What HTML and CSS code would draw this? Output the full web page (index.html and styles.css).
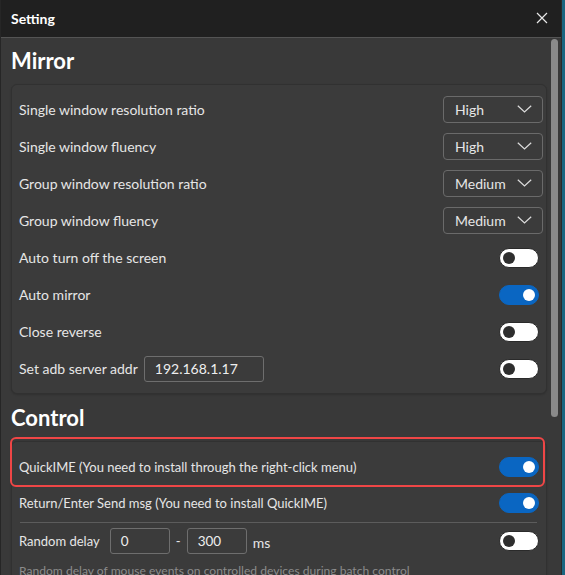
FILE: index.html
```html
<!DOCTYPE html>
<html>
<head>
<meta charset="utf-8">
<link rel="stylesheet" href="styles.css">
</head>
<body>
<div class="window">
  <div class="titlebar">
    <span class="title">Setting</span>
    <svg class="close" width="12" height="12" viewBox="0 0 12 12"><path d="M1 1 L11 11 M11 1 L1 11" stroke="#e8e8e8" stroke-width="1.2" fill="none"/></svg>
  </div>
  <div class="content">
    <div class="scroll">
      <h2 class="section-title">Mirror</h2>
      <div class="card">
        <div class="row">
          <span class="label">Single window resolution ratio</span>
          <div class="select"><span>High</span><svg class="chev" width="15" height="8" viewBox="0 0 15 8"><path d="M0.8 0.8 L7.5 7 L14.2 0.8" stroke="#dcdcdc" stroke-width="1.2" fill="none"/></svg></div>
        </div>
        <div class="row">
          <span class="label">Single window fluency</span>
          <div class="select"><span>High</span><svg class="chev" width="15" height="8" viewBox="0 0 15 8"><path d="M0.8 0.8 L7.5 7 L14.2 0.8" stroke="#dcdcdc" stroke-width="1.2" fill="none"/></svg></div>
        </div>
        <div class="row">
          <span class="label">Group window resolution ratio</span>
          <div class="select"><span>Medium</span><svg class="chev" width="15" height="8" viewBox="0 0 15 8"><path d="M0.8 0.8 L7.5 7 L14.2 0.8" stroke="#dcdcdc" stroke-width="1.2" fill="none"/></svg></div>
        </div>
        <div class="row">
          <span class="label">Group window fluency</span>
          <div class="select"><span>Medium</span><svg class="chev" width="15" height="8" viewBox="0 0 15 8"><path d="M0.8 0.8 L7.5 7 L14.2 0.8" stroke="#dcdcdc" stroke-width="1.2" fill="none"/></svg></div>
        </div>
        <div class="row">
          <span class="label">Auto turn off the screen</span>
          <span class="toggle"></span>
        </div>
        <div class="row">
          <span class="label">Auto mirror</span>
          <span class="toggle on"></span>
        </div>
        <div class="row">
          <span class="label">Close reverse</span>
          <span class="toggle"></span>
        </div>
        <div class="row">
          <div class="group">
            <span class="label">Set adb server addr</span>
            <div class="input ip">192.168.1.17</div>
          </div>
          <span class="toggle"></span>
        </div>
      </div>
      <h2 class="section-title control-title">Control</h2>
      <div class="card control">
        <div class="row small highlighted">
          <span class="label">QuickIME (You need to install through the right-click menu)</span>
          <span class="toggle on"></span>
          <span class="highlight-box"></span>
        </div>
        <div class="row small enter-row">
          <span class="label">Return/Enter Send msg (You need to install QuickIME)</span>
          <span class="toggle on"></span>
        </div>
        <div class="divider"></div>
        <div class="row small delay-row">
          <div class="group">
            <span class="label">Random delay</span>
            <div class="input num">0</div>
            <span class="dash">-</span>
            <div class="input num">300</div>
            <span class="unit">ms</span>
          </div>
          <span class="toggle"></span>
        </div>
        <div class="desc">Random delay of mouse events on controlled devices during batch control</div>
      </div>
    </div>
    <div class="scrollbar"></div>
  </div>
</div>
</body>
</html>
```
FILE: styles.css
```css
* { box-sizing: border-box; }
html, body { margin: 0; padding: 0; }
body {
  width: 565px;
  height: 575px;
  overflow: hidden;
  background: #1a6580;
  font-family: "Lato", "Noto Sans", sans-serif;
  color: #e6e6e6;
}
.window {
  width: 562px;
  height: 575px;
  background: #393939;
  border-left: 1px solid #262626;
  border-right: 1px solid #2a2a2a;
  display: flex;
  flex-direction: column;
}
.titlebar {
  height: 38px;
  flex: none;
  background: #202020;
  border-bottom: 1px solid #545454;
  display: flex;
  align-items: center;
  justify-content: space-between;
  padding: 0 13px 0 10px;
}
.title {
  font-size: 14px;
  font-weight: 700;
  color: #ffffff;
  margin-top: -1px;
}
.close { display: block; margin-top: -1px; }
.content {
  position: relative;
  flex: 1;
  overflow: hidden;
}
.scroll {
  padding: 0 14px 0 10px;
}
.section-title {
  margin: 0;
  padding-top: 9px;
  height: 46px;
  font-size: 22px;
  line-height: 28px;
  font-weight: 700;
  color: #ffffff;
}
.control-title {
  padding-top: 10px;
  height: 47px;
}
.card {
  background: #3b3b3b;
  border: 1px solid #313131;
  border-radius: 6px;
  padding: 6px 3px 6px 7px;
  box-shadow: 0 1px 2px rgba(0,0,0,0.15);
}
.row {
  height: 37px;
  display: flex;
  align-items: center;
  justify-content: space-between;
  font-size: 14px;
  position: relative;
}
.row.small { font-size: 13px; }
.label { white-space: nowrap; }
.group {
  display: flex;
  align-items: center;
}
.select {
  width: 100px;
  height: 27px;
  border: 1px solid #6a6a6a;
  border-radius: 4px;
  display: flex;
  align-items: center;
  justify-content: space-between;
  padding: 0 10px 0 11px;
  font-size: 14px;
  margin-top: -1px;
}
.chev { display: block; }
.toggle {
  width: 40px;
  height: 20px;
  border-radius: 10px;
  background: #ffffff;
  border: 1px solid #2a2a2a;
  position: relative;
  margin-right: 4px;
  flex: none;
}
.toggle::after {
  content: "";
  position: absolute;
  left: 3px;
  top: 3px;
  width: 12px;
  height: 12px;
  border-radius: 50%;
  background: #2e2e2e;
}
.toggle.on {
  background: #0a66c2;
  border-color: #0a66c2;
}
.toggle.on::after {
  left: auto;
  right: 3px;
  background: #ffffff;
}
.input {
  height: 26px;
  border: 1px solid #6e6e6e;
  border-radius: 3px;
  display: flex;
  align-items: center;
  padding-left: 10px;
  font-size: 14px;
  color: #eeeeee;
}
.input.ip {
  width: 120px;
  margin-left: 6px;
}
.input.num {
  width: 60px;
  font-size: 13.5px;
}
.group .label + .input.num { margin-left: 10px; }
.dash {
  width: 17px;
  text-align: center;
}
.unit {
  margin-left: 6px;
  margin-top: 3px;
  font-size: 14px;
}
.highlight-box {
  position: absolute;
  left: -9px;
  right: -2px;
  top: -11px;
  bottom: -2px;
  border: 2px solid #ef4646;
  border-radius: 6px;
  pointer-events: none;
}
.enter-row { height: 36px; }
.divider {
  height: 1px;
  background: #5c5c5c;
  margin: 1px 6px 0 1px;
}
.delay-row { height: 35px; }
.desc {
  font-size: 12.1px;
  color: #8c8c8c;
  padding-top: 5px;
}
.scrollbar {
  position: absolute;
  left: 550px;
  top: 1px;
  width: 7px;
  height: 378px;
  border-radius: 4px;
  background: #8a8a8a;
}
```
